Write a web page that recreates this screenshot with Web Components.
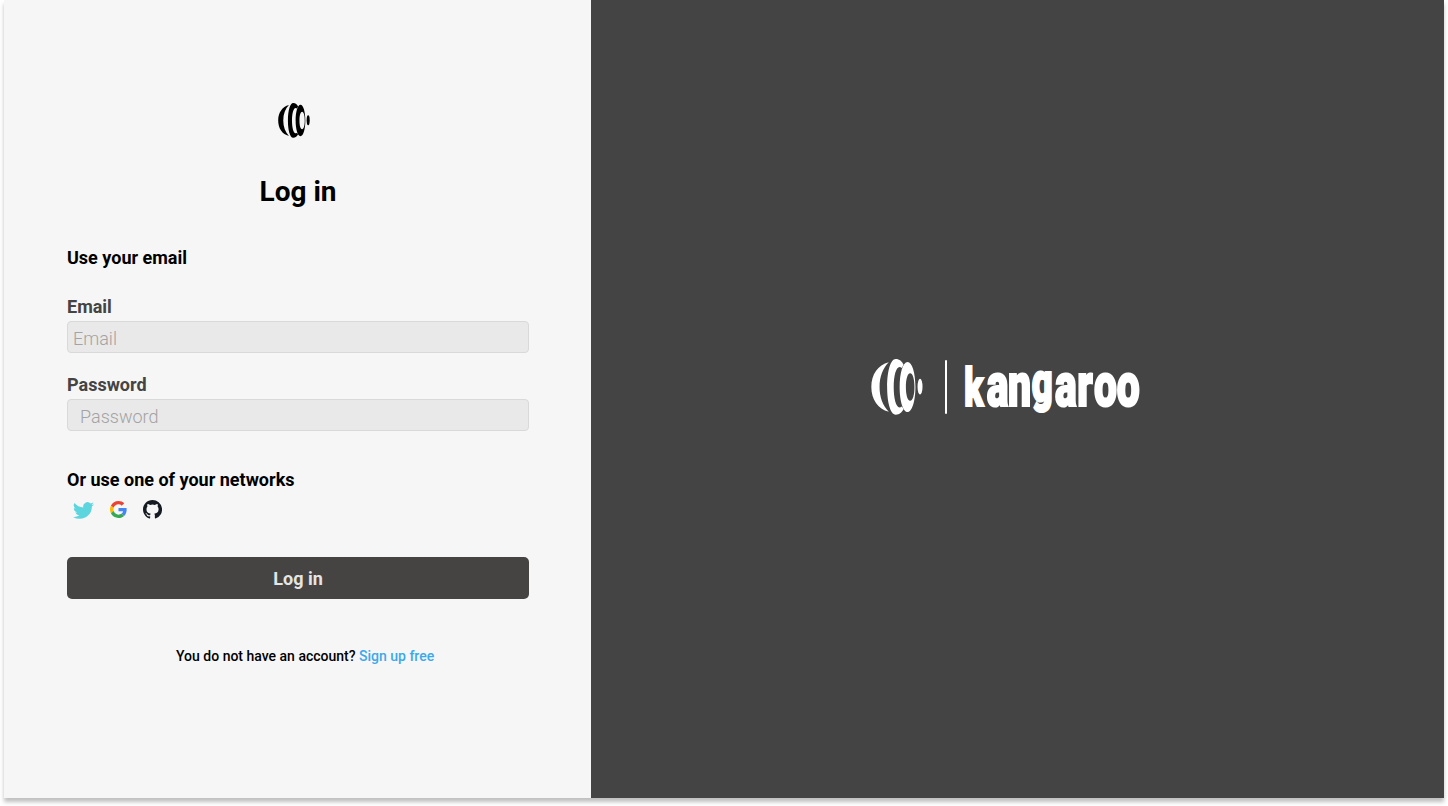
<!DOCTYPE html>
<html lang="en">
<head>
<meta charset="utf-8">
<title>Log in - kangaroo</title>
<style>
html,body{margin:0;height:100%;overflow:hidden;background:#fff;font-family:Roboto,"Liberation Sans",sans-serif}
</style>
</head>
<body>
<login-page></login-page>
<script>
const define=(name,html,ready)=>customElements.define(name,class extends HTMLElement{
  constructor(){super();const t=document.createElement('template');t.innerHTML=html;
    this.attachShadow({mode:'open'}).append(t.content.cloneNode(true));}
  connectedCallback(){if(ready)ready(this,this.shadowRoot);}
});

define('brand-mark',`<style>:host{display:block}svg{display:block;width:100%;height:100%}</style>
<svg viewBox="32 41 158 170" preserveAspectRatio="none" fill="currentColor" fill-rule="evenodd">
<path d="M86 51C53 59 33 88 33 126s20 67 53 75C68 183 58 157 58 126s10-57 28-75z"/>
<path d="M107 41c12 0 19 7 24 17l-5 10c-3-2-5-3-7-3-11 0-18 27-18 61s7 62 18 62c2 0 4-1 7-3l5 8c-5 10-12 17-24 17-16 0-26-38-26-84s10-85 26-85z"/>
<path d="M143 50c14 0 24 34 24 76s-10 76-24 76-24-34-24-76 10-76 24-76zm8 34c-8 0-13 18-13 42s5 42 13 42 13-18 13-42-5-42-13-42z"/>
<ellipse cx="181" cy="125" rx="7.5" ry="24"/></svg>`);

define('brand-lockup',`<style>:host{display:flex;align-items:center;color:#fff}
brand-mark{width:52px;height:56px}i{width:2px;height:54px;background:#fff;margin:0 18px 0 22px;border-radius:1px}
svg{display:block;width:178px;height:57px;overflow:visible}
text{font-family:Roboto,sans-serif;font-weight:900;fill:#fff;stroke:#fff;stroke-width:2.2px}</style>
<brand-mark></brand-mark><i></i>
<svg viewBox="0 0 178 57"><g transform="scale(.66 1)"><text y="48" font-size="62"><tspan x="-1" font-size="53">k</tspan><tspan x="33">a</tspan><tspan x="65">n</tspan><tspan x="101" y="43" font-size="55">g</tspan><tspan x="136.500" y="48">a</tspan><tspan x="170">r</tspan><tspan x="195.500">o</tspan><tspan x="230">o</tspan></text></g></svg>`);

define('text-field',`<style>:host{display:block}label{display:block;font-weight:700;font-size:18px;line-height:22px;color:#444;margin-bottom:3px}
input{display:block;box-sizing:border-box;width:100%;height:32px;border:1px solid #d9d9d9;border-radius:4px;background:#e9e9e9;padding:2px 0 0 var(--inset,5px);font:300 18px Roboto,sans-serif;outline:0}
input::placeholder{color:#a3a3a3;opacity:1}</style><label></label><input>`,(el,root)=>{
  root.querySelector('label').textContent=el.getAttribute('label');
  const i=root.querySelector('input');i.placeholder=el.getAttribute('label');i.type=el.getAttribute('type')||'text';
});

define('social-links',`<style>:host{display:flex;align-items:center;height:20px;padding-left:6px}svg{display:block}</style>
<svg width="21" height="17" viewBox="0 2 24 20" preserveAspectRatio="none" style="margin-top:2px" fill="#5cd5df"><path d="M24 4.6a9.9 9.9 0 0 1-2.8.8 4.9 4.9 0 0 0 2.1-2.7 9.900 9.900 0 0 1-3.100 1.200 4.900 4.900 0 0 0-8.400 4.500A14 14 0 0 1 1.700 3.150a4.900 4.900 0 0 0 1.500 6.600 4.900 4.900 0 0 1-2.200-.6v.06a4.900 4.900 0 0 0 3.950 4.830 4.900 4.900 0 0 1-2.200.08 4.900 4.900 0 0 0 4.600 3.400A9.900 9.900 0 0 1 0 19.540a14 14 0 0 0 7.550 2.210c9.100 0 14-7.500 14-14v-.64A10 10 0 0 0 24 4.600z"/></svg>
<svg width="17" height="17" viewBox="0 0 48 48" style="margin-left:16px"><path fill="#EA4335" d="M24 9.500c3.540 0 6.710 1.220 9.210 3.600l6.850-6.850C35.900 2.380 30.470 0 24 0 14.620 0 6.510 5.380 2.560 13.220l7.980 6.190C12.430 13.720 17.740 9.500 24 9.500z"/><path fill="#4285F4" d="M46.980 24.550c0-1.570-.15-3.090-.38-4.550H24v9.020h12.940c-.58 2.960-2.260 5.480-4.780 7.180l7.730 6c4.510-4.180 7.090-10.360 7.090-17.650z"/><path fill="#FBBC05" d="M10.530 28.590A14.500 14.500 0 0 1 9.770 24c0-1.600.27-3.140.76-4.590l-7.980-6.190A23.900 23.900 0 0 0 0 24c0 3.880.92 7.540 2.560 10.780l7.970-6.190z"/><path fill="#34A853" d="M24 48c6.480 0 11.930-2.130 15.890-5.810l-7.730-6c-2.150 1.450-4.920 2.300-8.160 2.300-6.260 0-11.570-4.220-13.470-9.910l-7.980 6.190C6.510 42.620 14.620 48 24 48z"/></svg>
<svg width="19" height="19" viewBox="0 0 16 16" style="margin-left:16px" fill="#161b22"><path d="M8 0C3.580 0 0 3.580 0 8c0 3.540 2.290 6.530 5.470 7.590.4.070.55-.17.55-.38 0-.19-.01-.82-.01-1.490-2.010.37-2.530-.49-2.690-.94-.09-.23-.48-.94-.82-1.130-.28-.15-.68-.52-.01-.53.63-.01 1.080.58 1.230.82.720 1.210 1.870.87 2.330.66.070-.52.280-.87.510-1.070-1.780-.2-3.640-.89-3.640-3.950 0-.87.310-1.590.82-2.150-.08-.2-.36-1.020.08-2.120 0 0 .67-.21 2.200.82a7.600 7.600 0 0 1 4 0c1.530-1.040 2.200-.82 2.200-.82.440 1.100.16 1.920.08 2.120.51.560.82 1.270.82 2.150 0 3.070-1.870 3.750-3.650 3.950.29.250.54.730.54 1.480 0 1.070-.01 1.930-.01 2.200 0 .21.150.46.550.38A8 8 0 0 0 8 0z"/></svg>`);

define('action-button',`<style>:host{display:block}button{display:block;width:100%;height:42px;border:0;border-radius:5px;background:#464442;color:#e5e5e5;font:700 18px Roboto,sans-serif;padding:1px 0 0}</style><button><slot></slot></button>`);

define('login-form',`<style>:host{display:flex;flex-direction:column;width:462px;padding:103px 0 0 63px}
brand-mark{width:32px;height:35px;margin-left:211px;color:#000}
h1{margin:37px 0 0;text-align:center;font-size:28px;line-height:34px;font-weight:700}
h2{margin:0;font-size:18px;line-height:22px;font-weight:700}
.email{margin-top:38px}.f1{margin-top:27px}.f2{margin-top:21px;--inset:12px}
.net{margin-top:38px}social-links{margin-top:8px}action-button{margin-top:38px}
p{margin:47px 0 0 109px;font-size:14px;line-height:20px;font-weight:500;white-space:nowrap}a{color:#3aa9ec}</style>
<brand-mark></brand-mark><h1>Log in</h1><h2 class="email">Use your email</h2>
<text-field class="f1" label="Email"></text-field><text-field class="f2" label="Password" type="password"></text-field>
<h2 class="net">Or use one of your networks</h2><social-links></social-links>
<action-button>Log in</action-button><p>You do not have an account? <a>Sign up free</a></p>`);

define('login-page',`<style>:host{display:grid;grid-template-columns:587px 1fr;width:1440px;height:798px;margin-left:4px;background:#f6f6f6;box-shadow:0 4px 4px rgba(0,0,0,.25)}
aside{background:#444;display:flex;padding:358px 0 0 280px;align-items:flex-start}</style>
<login-form></login-form><aside><brand-lockup></brand-lockup></aside>`);
</script>
</body>
</html>
